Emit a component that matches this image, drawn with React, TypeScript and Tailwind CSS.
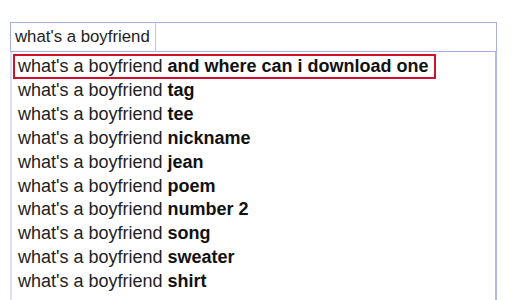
import React from "react";

const items = [
  "and where can i download one",
  "tag",
  "tee",
  "nickname",
  "jean",
  "poem",
  "number 2",
  "song",
  "sweater",
  "shirt",
];

export default function App() {
  return (
    <div className="w-[512px] h-[300px] bg-white overflow-hidden" style={{ fontFamily: '"Liberation Sans", Arial, sans-serif' }}>
      <div className="ml-[10px] mt-[22px] w-[487px]">
        <div className="h-[30px] border border-[#a9b0e0] flex items-stretch">
          <div className="w-[145px] border-r border-[#c8c8c8] flex items-center pl-[4px] text-[16.8px] text-[#222]">
            what's a boyfriend
          </div>
        </div>
        <div className="border-x-2 border-x-[#b4b8ec] border-l-[#dde0f4] pt-[2px] pl-[1px] h-[260px]">
          {items.map((s, i) =>
            i === 0 ? (
              <div key={i} className="w-fit border-2 border-[#d0102c] h-[25px] flex items-center pl-[3px] pr-[5px] text-[18px] text-[#222] whitespace-nowrap">
                what's a boyfriend&nbsp;<b className="text-[#111]">{s}</b>
              </div>
            ) : (
              <div key={i} className="h-[23.8px] flex items-center pl-[5px] text-[18px] text-[#222] whitespace-nowrap">
                what's a boyfriend&nbsp;<b className="text-[#111]">{s}</b>
              </div>
            )
          )}
        </div>
      </div>
    </div>
  );
}
